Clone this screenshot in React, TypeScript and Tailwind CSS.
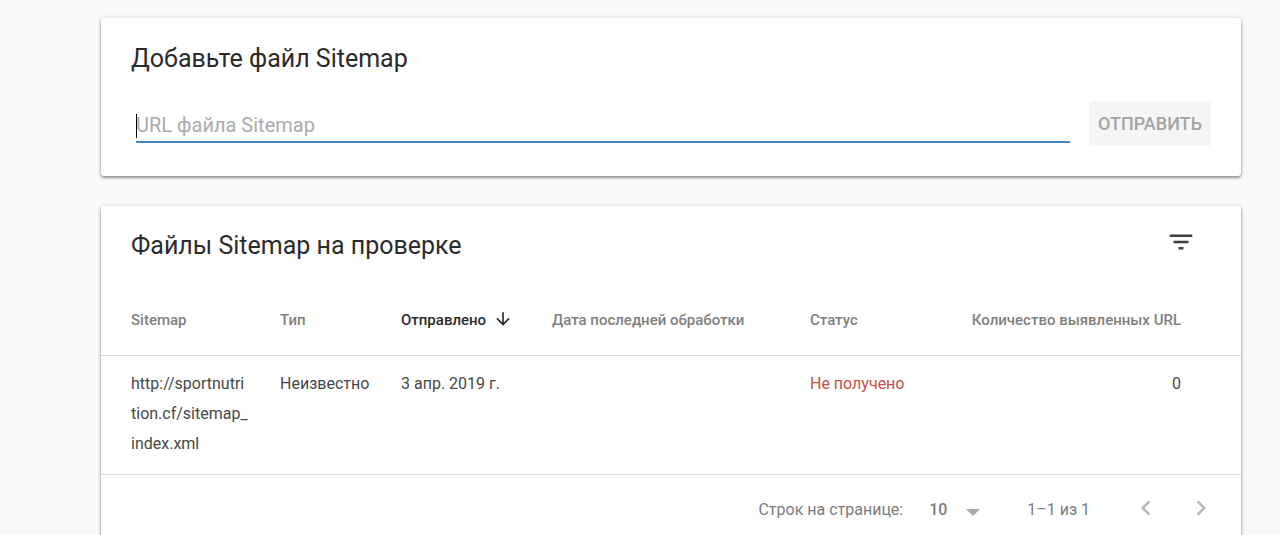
import React, { useState } from "react";

type Sitemap = {
  url: string;
  type: string;
  sent: string;
  processed: string;
  status: string;
  count: number;
};

const sitemaps: Sitemap[] = [
  {
    url: "http://sportnutrition.cf/sitemap_index.xml",
    type: "Неизвестно",
    sent: "3 апр. 2019 г.",
    processed: "",
    status: "Не получено",
    count: 0,
  },
];

function Icon({ d, className }: { d: string; className: string }) {
  return (
    <svg viewBox="0 0 24 24" fill="currentColor" aria-hidden="true" className={className}>
      <path d={d} />
    </svg>
  );
}

function Card({ children }: { children: React.ReactNode }) {
  return (
    <section className="rounded-[3px] bg-white shadow-[0_2px_3px_rgba(0,0,0,0.38),0_0_4px_rgba(0,0,0,0.16)]">
      {children}
    </section>
  );
}

function AddSitemap() {
  const [url, setUrl] = useState("");
  return (
    <Card>
      <form className="px-[30px] pt-[26px] pb-[30px]" onSubmit={(e) => e.preventDefault()}>
        <h2 className="text-[25px] leading-[30px]">
          <label htmlFor="sitemap-url">Добавьте файл Sitemap</label>
        </h2>
        <div className="mt-[27px] flex items-center gap-[19px]">
          <div className="relative ml-[5px] flex-1">
            <input
              id="sitemap-url"
              type="text"
              value={url}
              onChange={(e) => setUrl(e.target.value)}
              placeholder="URL файла Sitemap"
              className="block h-[39px] w-full border-b-2 border-[#4384bd] bg-transparent pt-1 text-[20px] caret-transparent outline-none placeholder:text-[#ababab]"
            />
            <span className="absolute top-[10px] left-0 h-6 w-px bg-black" />
          </div>
          <button
            type="submit"
            disabled={!url}
            className="h-[45px] rounded-[3px] bg-[#f5f5f5] px-[9px] text-[18px] font-medium text-[#a3a3a3]"
          >
            ОТПРАВИТЬ
          </button>
        </div>
      </form>
    </Card>
  );
}

function SitemapList() {
  return (
    <Card>
      <header className="flex items-start justify-between pt-[21px] pr-[45px] pl-[30px]">
        <h2 className="pt-1 text-[25px] leading-[30px]">Файлы Sitemap на проверке</h2>
        <button type="button" aria-label="Фильтр" className="text-[#3c3c3c]">
          <Icon d="M10 18h4v-2h-4v2zM3 6v2h18V6H3zm3 7h12v-2H6v2z" className="size-[30px]" />
        </button>
      </header>
      <table className="mt-6 w-full table-fixed text-left text-[16px]">
        <colgroup>
          <col className="w-[179px]" />
          <col className="w-[121px]" />
          <col className="w-[151px]" />
          <col />
          <col className="w-[130px]" />
          <col className="w-[301px]" />
        </colgroup>
        <thead>
          <tr className="h-[70px] border-b border-[#dcdcdc] text-[15px] whitespace-nowrap text-[#808080]">
            <th className="pl-[30px] font-medium">Sitemap</th>
            <th className="font-medium">Тип</th>
            <th className="font-medium text-[#2b2b2b]" aria-sort="descending">
              <button type="button" className="flex items-start gap-[7px]">
                Отправлено
                <Icon
                  d="M20 12l-1.41-1.41L13 16.17V4h-2v12.17l-5.58-5.59L4 12l8 8 8-8z"
                  className="size-5"
                />
              </button>
            </th>
            <th className="font-medium">Дата последней обработки</th>
            <th className="font-medium">Статус</th>
            <th className="pr-[60px] text-right font-medium">Количество выявленных URL</th>
          </tr>
        </thead>
        <tbody>
          {sitemaps.map((s) => (
            <tr key={s.url} className="border-b border-[#dcdcdc] align-top leading-[30px] text-[#484848]">
              <td className="pt-[13px] pr-[31px] pb-[15px] pl-[30px] break-all">{s.url}</td>
              <td className="pt-[13px]">{s.type}</td>
              <td className="pt-[13px]">{s.sent}</td>
              <td className="pt-[13px]">{s.processed}</td>
              <td className="pt-[13px] text-[#c5504a]">{s.status}</td>
              <td className="pt-[13px] pr-[60px] text-right">{s.count}</td>
            </tr>
          ))}
        </tbody>
      </table>
      <footer className="flex h-[70px] items-center justify-end pr-[25px] text-[16px] text-[#7c7c7c]">
        <label htmlFor="page-size">Строк на странице:</label>
        <div className="relative ml-[26px]">
          <select
            id="page-size"
            defaultValue="10"
            className="block w-[51px] appearance-none bg-transparent font-medium outline-none"
          >
            <option>10</option>
            <option>25</option>
            <option>50</option>
          </select>
          <svg
            viewBox="0 0 14 7"
            aria-hidden="true"
            className="pointer-events-none absolute top-[11px] right-0 w-[14px] text-[#a8a8a8]"
          >
            <path d="M0 0h14L7 7z" fill="currentColor" />
          </svg>
        </div>
        <span className="ml-[47px]">1–1 из 1</span>
        <div className="ml-[41px] flex gap-[25px] pb-1 text-[#b8b8b8]">
          <button type="button" aria-label="Предыдущая страница">
            <Icon d="M15.41 7.41L14 6l-6 6 6 6 1.41-1.41L10.83 12z" className="size-[30px]" />
          </button>
          <button type="button" aria-label="Следующая страница">
            <Icon d="M10 6L8.59 7.41 13.17 12l-4.58 4.59L10 18l6-6z" className="size-[30px]" />
          </button>
        </div>
      </footer>
    </Card>
  );
}

export default function App() {
  return (
    <div className="h-screen overflow-hidden bg-[#fafafa] font-[Roboto,sans-serif] text-[#2b2b2b]">
      <main className="flex flex-col gap-[30px] pt-[18px] pr-[39px] pl-[101px]">
        <AddSitemap />
        <SitemapList />
      </main>
    </div>
  );
}
